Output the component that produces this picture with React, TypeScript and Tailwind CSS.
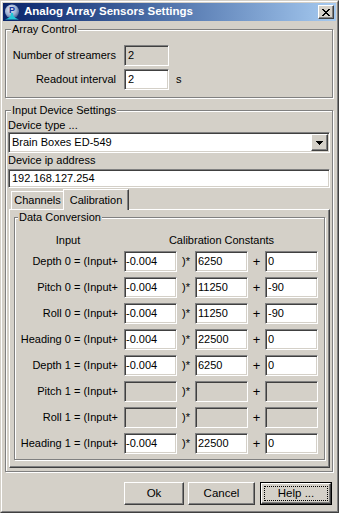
import React from 'react';

const sunken =
  'border border-t-[#808080] border-l-[#808080] border-b-white border-r-white shadow-[inset_1px_1px_0_#404040,inset_-1px_-1px_0_#d4d0c8]';
const raised =
  'border border-t-white border-l-white border-b-[#404040] border-r-[#404040] shadow-[inset_-1px_-1px_0_#808080]';
const etched = 'relative border border-[#808080] shadow-[inset_1px_1px_0_#fff,1px_1px_0_#fff]';

const Legend: React.FC<{ text: string; left?: string }> = ({ text, left = 'left-[5px]' }) => (
  <span className={`absolute -top-[7px] ${left} bg-[#d4d0c8] px-[1px] leading-[13px]`}>{text}</span>
);

const Box: React.FC<{ value?: string; width: string; disabled?: boolean; pad?: string; height?: string }> = ({
  value,
  width,
  disabled,
  pad = 'pl-[2px]',
  height = 'h-[21px]',
}) => (
  <div className={`${sunken} ${width} ${height} ${pad} flex items-center ${disabled ? 'bg-[#d4d0c8]' : 'bg-white'}`}>
    {value}
  </div>
);

interface CalRow {
  name: string;
  a?: string;
  b?: string;
  c?: string;
}

const rows: CalRow[] = [
  { name: 'Depth 0', a: '-0.004', b: '6250', c: '0' },
  { name: 'Pitch 0', a: '-0.004', b: '11250', c: '-90' },
  { name: 'Roll 0', a: '-0.004', b: '11250', c: '-90' },
  { name: 'Heading 0', a: '-0.004', b: '22500', c: '0' },
  { name: 'Depth 1', a: '-0.004', b: '6250', c: '0' },
  { name: 'Pitch 1' },
  { name: 'Roll 1' },
  { name: 'Heading 1', a: '-0.004', b: '22500', c: '0' },
];

const AppIcon = () => (
  <svg width="16" height="16" viewBox="0 0 16 16">
    <defs>
      <radialGradient id="ball" cx="0.4" cy="0.35" r="0.7">
        <stop offset="0" stopColor="#e8ecf4" />
        <stop offset="0.6" stopColor="#9aaed0" />
        <stop offset="1" stopColor="#3c5a8c" />
      </radialGradient>
    </defs>
    <circle cx="8" cy="7.5" r="7" fill="url(#ball)" />
    <text x="8" y="9" textAnchor="middle" fontSize="9" fontWeight="bold" fill="#1838a0" fontFamily="Liberation Sans, sans-serif">
      P
    </text>
    <path d="M7 9 L9 9 L9.5 12 Q11 14.5 15 15.5 L1 15.5 Q5 14.5 6.5 12 Z" fill="#22c8d8" />
  </svg>
);

const CloseGlyph = () => (
  <svg width="8" height="7" viewBox="0 0 8 7" shapeRendering="crispEdges">
    <path
      d="M0 0h2v1h1v1h2v-1h1v-1h2v1h-1v1h-1v1h-1v1h1v1h1v1h1v1h-2v-1h-1v-1h-2v1h-1v1h-2v-1h1v-1h1v-1h1v-1h-1v-1h-1z"
      fill="#000"
    />
  </svg>
);

export default function App() {
  return (
    <div className="w-[339px] h-[513px] bg-[#d4d0c8] border border-t-[#d4d0c8] border-l-[#d4d0c8] border-b-[#404040] border-r-[#404040] font-['Liberation_Sans',Arial,sans-serif] text-[11px] text-black">
      <div className="h-full border border-t-white border-l-white border-b-[#808080] border-r-[#808080] p-[1px] flex flex-col">
        {/* title bar */}
        <div className="h-[18px] flex items-center bg-gradient-to-r from-[#0a246a] to-[#a6caf0] pl-[1px] pr-[2px]">
          <AppIcon />
          <span className="ml-[4px] text-white font-bold text-[11.5px] leading-none whitespace-nowrap">
            Analog Array Sensors Settings
          </span>
          <div className={`ml-auto w-[16px] h-[14px] bg-[#d4d0c8] ${raised} flex items-center justify-center`}>
            <CloseGlyph />
          </div>
        </div>

        <div className="flex-1 flex flex-col pl-[2px] pr-[3px]">
          {/* Array Control */}
          <div className={`${etched} mt-[8px] pt-[15px] pb-[7px]`}>
            <Legend text="Array Control" />
            <div className="flex items-center">
              <span className="w-[110px] text-right">Number of streamers</span>
              <div className="ml-[8px]">
                <Box value="2" width="w-[45px]" disabled pad="pl-[3px]" />
              </div>
            </div>
            <div className="flex items-center mt-[3px]">
              <span className="w-[110px] text-right">Readout interval</span>
              <div className="ml-[8px]">
                <Box value="2" width="w-[45px]" pad="pl-[3px]" />
              </div>
              <span className="ml-[7px]">s</span>
            </div>
          </div>

          {/* Input Device Settings */}
          <div className={`${etched} mt-[12px] pt-[8px] pb-[3px] px-[2px]`}>
            <Legend text="Input Device Settings" />
            <div className="leading-[13px]">Device type ...</div>
            <div className={`${sunken} h-[21px] bg-white flex items-center pl-[3px] pr-[1px]`}>
              <span>Brain Boxes ED-549</span>
              <div className={`ml-auto w-[17px] h-[17px] bg-[#d4d0c8] ${raised} flex items-center justify-center`}>
                <svg width="7" height="4" viewBox="0 0 7 4" shapeRendering="crispEdges">
                  <path d="M0 0h7v1h-1v1h-1v1h-1v1h-1v-1h-1v-1h-1v-1h-1z" fill="#000" />
                </svg>
              </div>
            </div>
            <div className="leading-[14px]">Device ip address</div>
            <div className="mt-[2px]">
              <Box value="192.168.127.254" width="w-full" height="h-[19px]" pad="pl-[3px]" />
            </div>

            {/* tabs */}
            <div className="ml-[1px] mt-[1px] flex items-end h-[20px] relative z-10">
              <div className="ml-[2px] w-[52px] h-[18px] border-t border-l border-white flex items-center justify-center">
                Channels
              </div>
              <div className="w-[66px] h-[21px] -mb-[1px] bg-[#d4d0c8] border-t border-l border-r border-t-white border-l-white border-r-[#404040] shadow-[inset_-1px_0_0_#808080] flex items-start justify-center pt-[2px]">
                Calibration
              </div>
            </div>
            <div className={`ml-[1px] ${raised} pt-[7px] pb-[7px]`}>
              {/* Data Conversion */}
              <div className={`${etched} mx-[4px] pt-[15px] pb-[5px]`}>
                <Legend text="Data Conversion" left="left-[3px]" />
                <div className="flex leading-[14px] mb-[4px]">
                  <span className="w-[103px] pl-[3px] text-center">Input</span>
                  <span className="ml-[6px] w-[53px]" />
                  <span className="w-[18px]" />
                  <span className="w-[53px] flex justify-center whitespace-nowrap">Calibration Constants</span>
                </div>
                <div className="flex flex-col gap-[5px]">
                  {rows.map((r) => (
                    <div key={r.name} className="flex items-center">
                      <span className="w-[103px] text-right whitespace-nowrap">{r.name} = (Input+</span>
                      <div className="ml-[6px]">
                        <Box value={r.a} width="w-[53px]" disabled={!r.a} pad="pl-[1px]" />
                      </div>
                      <span className="w-[18px] text-center">)*</span>
                      <Box value={r.b} width="w-[53px]" disabled={!r.b} />
                      <span className="w-[17px] text-center text-[13px]">+</span>
                      <Box value={r.c} width="w-[53px]" disabled={!r.c} />
                    </div>
                  ))}
                </div>
              </div>
            </div>
          </div>

          {/* buttons */}
          <div className="mt-[10px] flex justify-end mr-[1px] text-[11.5px]">
            <button className={`w-[60px] h-[23px] ${raised} bg-[#d4d0c8]`}>Ok</button>
            <button className={`ml-[4px] w-[67px] h-[23px] ${raised} bg-[#d4d0c8]`}>Cancel</button>
            <button className="ml-[5px] w-[72px] h-[23px] border border-black bg-[#d4d0c8] flex">
              <span className={`flex-1 ${raised} flex p-[2px]`}>
                <span className="flex-1 border border-dotted border-black flex items-center justify-center">
                  Help ...
                </span>
              </span>
            </button>
          </div>
        </div>
      </div>
    </div>
  );
}
